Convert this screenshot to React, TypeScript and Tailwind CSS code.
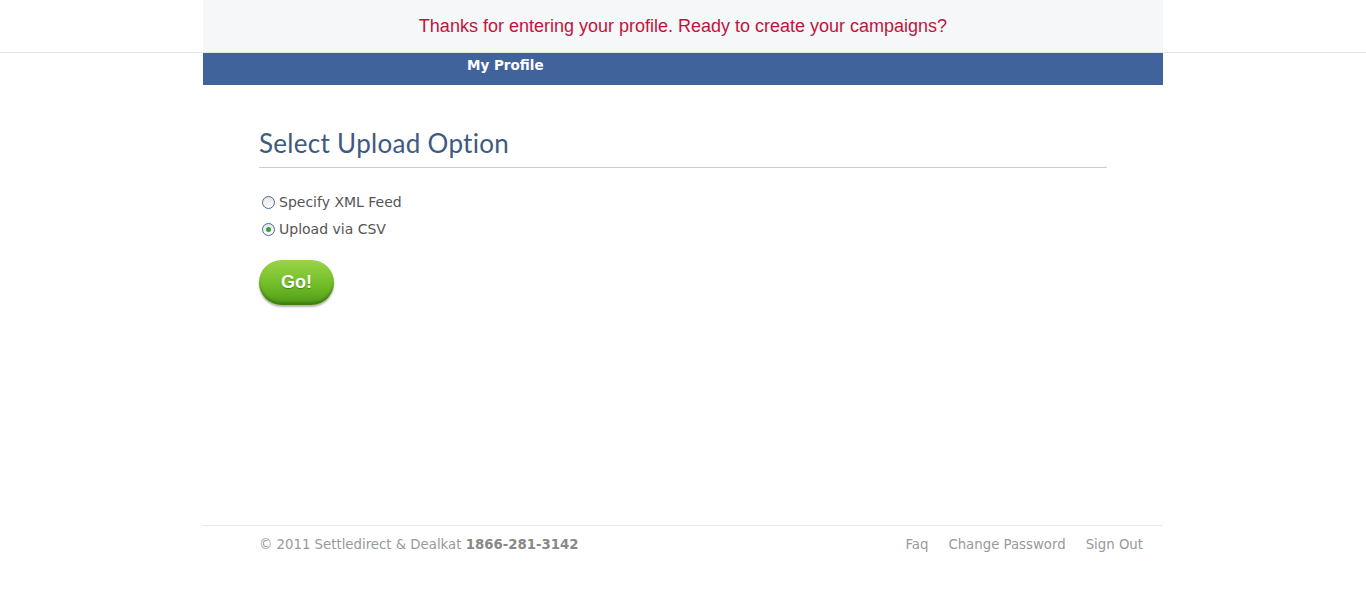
export default function App() {
  return (
    <div className="min-h-[608px] bg-white font-['DejaVu_Sans',Verdana,sans-serif]">
      <div className="border-b border-[#e6e6e6]">
        <div className="mx-auto flex h-[52px] w-[960px] items-center justify-center bg-[#f6f7f9]">
          <p className="font-['Liberation_Sans',Arial,sans-serif] text-[18px] text-[#c0143c]">
            Thanks for entering your profile. Ready to create your campaigns?
          </p>
        </div>
      </div>
      <div className="mx-auto h-[32px] w-[960px] bg-[#41639b] pl-[264px] pt-[1px] leading-[22px]">
        <span className="text-[13.5px] font-bold text-white">My Profile</span>
      </div>

      <div className="mx-auto w-[960px] px-[56px]">
        <h1 className="mt-[43px] border-b border-[#cccccc] pb-[9px] font-['Lato',sans-serif] text-[26px] leading-[30px] tracking-[0.3px] text-[#3e5a80]">
          Select Upload Option
        </h1>
        <div className="mt-[24px] flex flex-col gap-[7px] pl-[3px] text-[14px] leading-[20px] text-[#555]">
          <label className="flex items-center gap-[4px]">
            <span className="flex h-[13px] w-[13px] items-center justify-center rounded-full border border-[#4a6a94] bg-gradient-to-b from-[#e6e6e6] to-white" />
            Specify XML Feed
          </label>
          <label className="flex items-center gap-[4px]">
            <span className="flex h-[13px] w-[13px] items-center justify-center rounded-full border border-[#4a6a94] bg-gradient-to-b from-[#e6e6e6] to-white">
              <span className="h-[5px] w-[5px] rounded-full bg-[#3aa13a]" />
            </span>
            Upload via CSV
          </label>
        </div>
        <button className="mt-[21px] flex h-[45px] w-[75px] items-center justify-center rounded-full bg-gradient-to-b from-[#9ad446] via-[#74c02a] to-[#4f9a16] font-['Liberation_Sans',Arial,sans-serif] text-[18px] font-bold text-white shadow-[0_2px_2px_rgba(0,0,0,0.3),inset_0_-3px_2px_rgba(40,90,10,0.4)] [text-shadow:0_1px_1px_rgba(0,0,0,0.3)]">
          Go!
        </button>
      </div>

      <div className="mx-auto mt-[220px] flex w-[960px] items-center justify-between border-t border-[#e8e8e8] pl-[56px] pr-[20px] pt-[9px] text-[13.3px] leading-[20px] text-[#999]">
        <span>
          © 2011 Settledirect &amp; Dealkat <b className="text-[#888]">1866-281-3142</b>
        </span>
        <div className="flex gap-[20px]">
          <a>Faq</a>
          <a>Change Password</a>
          <a>Sign Out</a>
        </div>
      </div>
    </div>
  );
}
